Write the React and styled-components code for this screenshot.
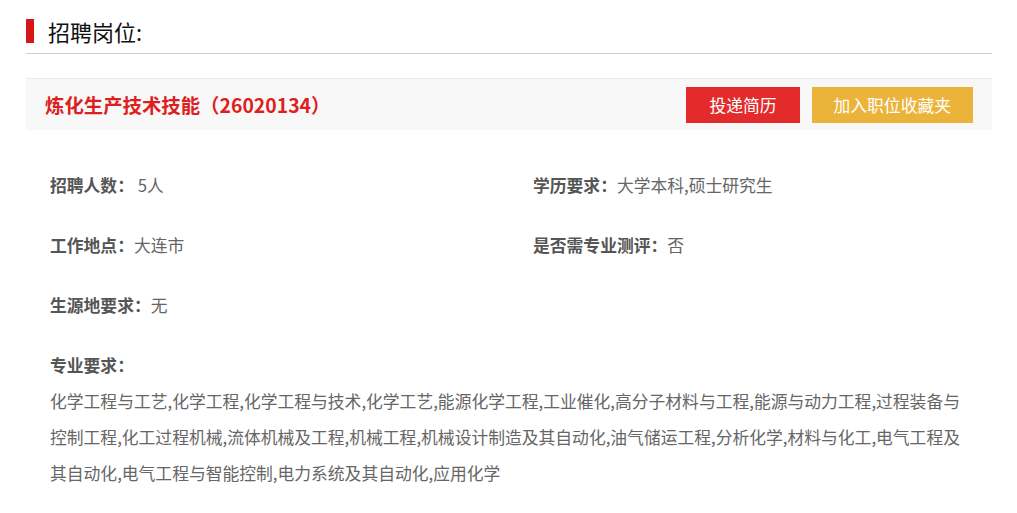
import styled, { createGlobalStyle } from 'styled-components';

const GlobalStyle = createGlobalStyle`
  body {
    margin: 0;
    background: #fff;
    font-family: "Noto Sans CJK SC", "Noto Sans", sans-serif;
  }
`;

const Page = styled.div`
  padding: 0 25px 0 26px;
`;

const SectionHead = styled.div`
  padding: 19px 0 10px;
  border-bottom: 1px solid #d0d0d0;
`;

const HeadTitle = styled.h2`
  display: flex;
  align-items: center;
  gap: 14px;
  height: 24px;
  margin: 0;
  font-size: 22px;
  font-weight: normal;
  color: #111;
  &::before {
    content: '';
    width: 8px;
    height: 24px;
    background: #d7141a;
  }
`;

const JobBar = styled.div`
  margin-top: 24px;
  height: 51px;
  border-top: 1px solid #ececec;
  background: #f8f8f8;
  display: flex;
  align-items: center;
  justify-content: space-between;
  padding: 0 19px;
`;

const JobName = styled.h3`
  margin: 0;
  font-size: 19.4px;
  font-weight: bold;
  color: #de1f1f;
`;

const Actions = styled.div`
  display: flex;
  gap: 12px;
`;

const Button = styled.button`
  height: 36px;
  padding: 0 ${p => p.$pad}px;
  border: 0;
  font-family: inherit;
  font-size: 16.8px;
  color: #fff;
  background: ${p => p.$bg};
  cursor: pointer;
`;

const Details = styled.div`
  padding: 25px 0 0 24px;
`;

const InfoGrid = styled.div`
  display: grid;
  grid-template-columns: 483px 1fr;
  grid-auto-rows: 60px;
  align-items: center;
`;

const Field = styled.div`
  font-size: 16.8px;
  color: #666;
`;

const Label = styled.span`
  font-weight: bold;
  color: #555;
`;

const Major = styled.div`
  margin-top: 12px;
  width: 916px;
  font-size: 16.8px;
  line-height: 36px;
  color: #666;
`;

export default function App() {
  return (
    <Page>
      <GlobalStyle />
      <SectionHead>
        <HeadTitle>招聘岗位:</HeadTitle>
      </SectionHead>
      <JobBar>
        <JobName>炼化生产技术技能（26020134）</JobName>
        <Actions>
          <Button $bg="#e32b2b" $pad={23}>投递简历</Button>
          <Button $bg="#ebb33a" $pad={22}>加入职位收藏夹</Button>
        </Actions>
      </JobBar>
      <Details>
        <InfoGrid>
          <Field><Label>招聘人数：</Label> 5人</Field>
          <Field><Label>学历要求：</Label>大学本科,硕士研究生</Field>
          <Field><Label>工作地点：</Label>大连市</Field>
          <Field><Label>是否需专业测评：</Label>否</Field>
          <Field><Label>生源地要求：</Label>无</Field>
        </InfoGrid>
        <Major>
          <Label>专业要求：</Label>
          <div>化学工程与工艺,化学工程,化学工程与技术,化学工艺,能源化学工程,工业催化,高分子材料与工程,能源与动力工程,过程装备与控制工程,化工过程机械,流体机械及工程,机械工程,机械设计制造及其自动化,油气储运工程,分析化学,材料与化工,电气工程及其自动化,电气工程与智能控制,电力系统及其自动化,应用化学</div>
        </Major>
      </Details>
    </Page>
  );
}
